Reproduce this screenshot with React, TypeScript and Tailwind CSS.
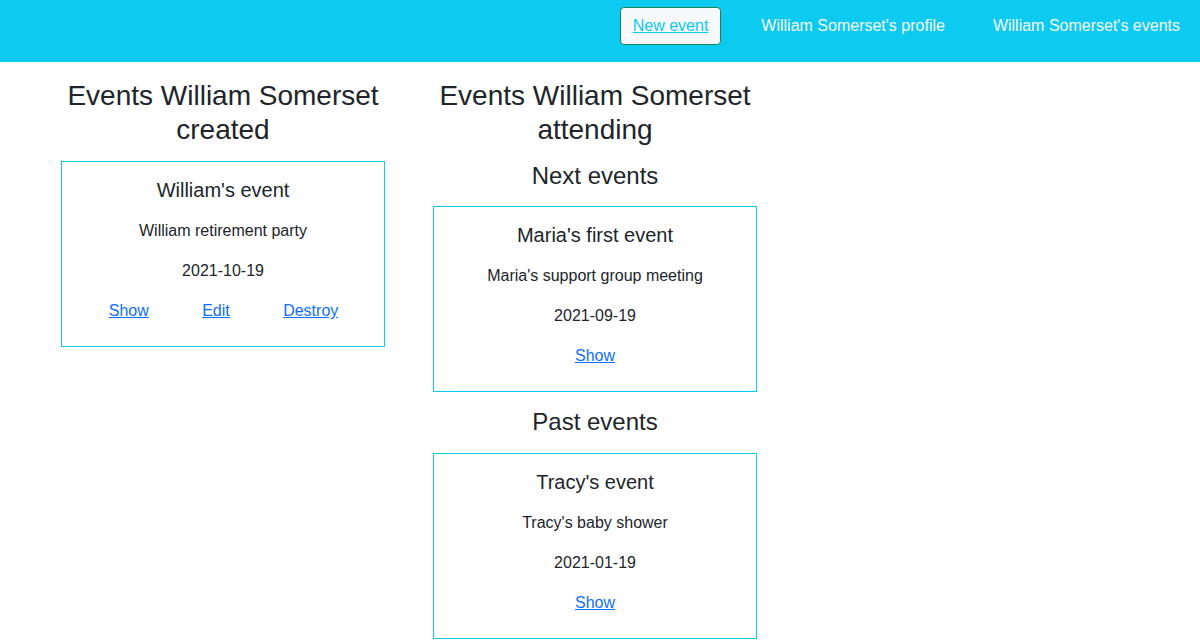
const created = [
  {
    title: "William's event",
    description: "William retirement party",
    date: "2021-10-19",
    owner: true,
  },
];

const nextEvents = [
  {
    title: "Maria's first event",
    description: "Maria's support group meeting",
    date: "2021-09-19",
    owner: false,
  },
];

const pastEvents = [
  {
    title: "Tracy's event",
    description: "Tracy's baby shower",
    date: "2021-01-19",
    owner: false,
  },
];

type Ev = { title: string; description: string; date: string; owner: boolean };

const EventCard = ({ ev }: { ev: Ev }) => (
  <div className="border border-[#0dcaf0] px-4 pt-4 pb-[23px] text-center">
    <h5 className="text-[20px] leading-[24px] mb-[17px]">{ev.title}</h5>
    <p className="leading-6 mb-4">{ev.description}</p>
    <p className="leading-6 mb-4">{ev.date}</p>
    {ev.owner ? (
      <div className="flex justify-around pl-[4px] pr-[3px] leading-6">
        <a href="#" className="text-[#0d6efd] underline">Show</a>
        <a href="#" className="text-[#0d6efd] underline">Edit</a>
        <a href="#" className="text-[#0d6efd] underline">Destroy</a>
      </div>
    ) : (
      <div className="leading-6">
        <a href="#" className="text-[#0d6efd] underline">Show</a>
      </div>
    )}
  </div>
);

export default function App() {
  return (
    <div className="min-h-[640px] bg-white text-[#212529] text-base font-['Liberation_Sans',Arial,sans-serif]">
      {/* Navbar */}
      <nav className="h-[62px] bg-[#0dcaf0] flex items-start justify-end pt-[7px] pr-5">
        <a
          href="#"
          className="h-[38px] flex items-center px-3 border border-[#198754] rounded bg-[#f8f9fa] text-[#0dcaf0] underline leading-6"
        >
          New event
        </a>
        <a href="#" className="h-[38px] flex items-center ml-[40px] text-[#f8f9fa] leading-6">
          William Somerset's profile
        </a>
        <a href="#" className="h-[38px] flex items-center ml-[48px] text-[#f8f9fa] leading-6">
          William Somerset's events
        </a>
      </nav>

      {/* Columns */}
      <main className="flex gap-[48px] pl-[61px] pt-[17px]">
        <section className="w-[324px] flex flex-col">
          <h3 className="text-[28px] leading-[1.2] text-center mb-[15px]">
            Events William Somerset created
          </h3>
          {created.map((ev, i) => (
            <EventCard key={i} ev={ev} />
          ))}
        </section>

        <section className="w-[324px] flex flex-col">
          <h3 className="text-[28px] leading-[1.2] text-center mb-[16px]">
            Events William Somerset attending
          </h3>
          <h4 className="text-[24px] leading-[1.2] text-center mb-[15px]">Next events</h4>
          {nextEvents.map((ev, i) => (
            <EventCard key={i} ev={ev} />
          ))}
          <h4 className="text-[24px] leading-[1.2] text-center mt-[16px] mb-[16px]">Past events</h4>
          {pastEvents.map((ev, i) => (
            <EventCard key={i} ev={ev} />
          ))}
        </section>
      </main>
    </div>
  );
}
